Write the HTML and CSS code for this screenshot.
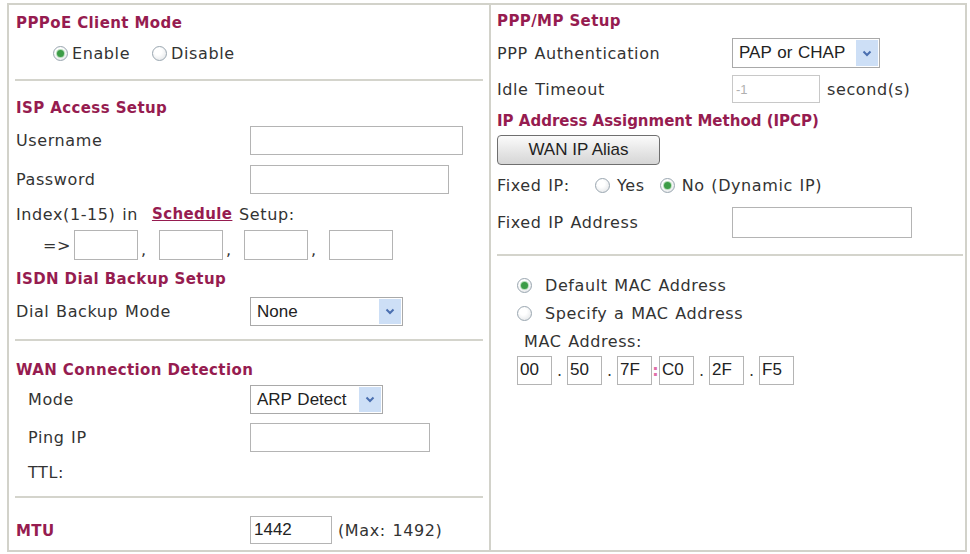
FILE: index.html
```html
<!DOCTYPE html>
<html lang="en">
<head>
    <meta charset="UTF-8">
    <title>PPPoE Setup</title>
    <link rel="stylesheet" href="styles.css">
</head>
<body>
    <div class="panel">
        <!-- Left column -->
        <div class="col col-left">
            <div class="row h36"><span class="title">PPPoE Client Mode</span></div>
            <div class="row h24 mode-opts">
                <label class="opt first"><span class="radio on"></span>Enable</label>
                <label class="opt"><span class="radio"></span>Disable</label>
            </div>
            <div class="sep sep-left"></div>

            <div class="row h26"><span class="title">ISP Access Setup</span></div>
            <div class="row h39">
                <span class="label">Username</span>
                <input class="text w-user" type="text">
            </div>
            <div class="row h39">
                <span class="label">Password</span>
                <input class="text w-pass" type="password">
            </div>
            <div class="row h30">
                Index(1-15) in<a class="link" href="#">Schedule</a>&nbsp;Setup:
            </div>
            <div class="row h32 index-row">
                <span class="arrow-txt">=&gt;</span>
                <input class="text w-idx" type="text"><span class="comma">,</span>
                <input class="text w-idx" type="text"><span class="comma">,</span>
                <input class="text w-idx" type="text"><span class="comma">,</span>
                <input class="text w-idx" type="text">
            </div>

            <div class="row h36"><span class="title">ISDN Dial Backup Setup</span></div>
            <div class="row h29">
                <span class="label">Dial Backup Mode</span>
                <div class="select w-dial">None<span class="drop"><svg width="10" height="7" viewBox="0 0 10 7"><path d="M1.5 1.5 L5 5 L8.5 1.5" fill="none" stroke="#4a6fb0" stroke-width="2"/></svg></span></div>
            </div>
            <div class="sep sep-left sep-b"></div>

            <div class="row h30"><span class="title">WAN Connection Detection</span></div>
            <div class="row h29 indent">
                <span class="label">Mode</span>
                <div class="select w-mode">ARP Detect<span class="drop"><svg width="10" height="7" viewBox="0 0 10 7"><path d="M1.5 1.5 L5 5 L8.5 1.5" fill="none" stroke="#4a6fb0" stroke-width="2"/></svg></span></div>
            </div>
            <div class="row h47 indent">
                <span class="label">Ping IP</span>
                <input class="text w-ping" type="text">
            </div>
            <div class="row h22 indent">
                <span class="label">TTL:</span>
            </div>
            <div class="sep sep-left sep-b"></div>

            <div class="row h36">
                <span class="label"><span class="title">MTU</span></span>
                <input class="text w-mtu" type="text" value="1442">
                <span class="hint">(Max:&nbsp;1492)</span>
            </div>
        </div>

        <!-- Right column -->
        <div class="col col-right">
            <div class="row h32"><span class="title">PPP/MP Setup</span></div>
            <div class="row h32">
                <span class="label">PPP Authentication</span>
                <div class="select w-auth">PAP or CHAP<span class="drop"><svg width="10" height="7" viewBox="0 0 10 7"><path d="M1.5 1.5 L5 5 L8.5 1.5" fill="none" stroke="#4a6fb0" stroke-width="2"/></svg></span></div>
            </div>
            <div class="row h40">
                <span class="label">Idle Timeout</span>
                <input class="text w-idle" type="text" value="-1" disabled>
                <span class="unit">second(s)</span>
            </div>
            <div class="row h24"><span class="title tight">IP Address Assignment Method (IPCP)</span></div>
            <div class="row h34">
                <button class="btn" type="button">WAN IP Alias</button>
            </div>
            <div class="row h36">
                <span class="fixed-label">Fixed IP:</span>
                <label class="opt yes"><span class="radio"></span>Yes</label>
                <label class="opt"><span class="radio on"></span>No (Dynamic IP)</label>
            </div>
            <div class="row h39">
                <span class="label">Fixed IP Address</span>
                <input class="text w-fixed" type="text">
            </div>
            <div class="sep sep-right"></div>

            <div class="row h26 mac-opt">
                <label class="opt wide"><span class="radio on"></span>Default MAC Address</label>
            </div>
            <div class="row h30 mac-opt">
                <label class="opt wide"><span class="radio"></span>Specify a MAC Address</label>
            </div>
            <div class="row h27 mac-label">MAC Address:</div>
            <div class="row h30 mac-opt">
                <input class="text mac" type="text" value="00"><span class="mac-dot">.</span>
                <input class="text mac" type="text" value="50"><span class="mac-dot">.</span>
                <input class="text mac" type="text" value="7F"><span class="mac-colon">:</span>
                <input class="text mac" type="text" value="C0"><span class="mac-dot">.</span>
                <input class="text mac" type="text" value="2F"><span class="mac-dot">.</span>
                <input class="text mac" type="text" value="F5">
            </div>
        </div>
    </div>
</body>
</html>
```

FILE: styles.css
```css
/* Page */
body {
    margin: 0;
    background: #fff;
    font-family: "DejaVu Sans", Verdana, sans-serif;
    font-size: 16px;
    letter-spacing: 0.6px;
    word-spacing: 1px;
    color: #333;
}

.panel {
    margin: 3px 0 0 7px;
    width: 960px;
    height: 549px;
    box-sizing: border-box;
    border: 2px solid #d2d2ca;
    display: grid;
    grid-template-columns: 482px 1fr;
}

.col-left {
    border-right: 2px solid #d2d2ca;
    padding-left: 7px;
}

.col-right {
    padding-left: 6px;
}

/* Rows */
.row {
    display: flex;
    align-items: center;
    white-space: nowrap;
}

.h22 { height: 22px; }
.h24 { height: 24px; }
.h26 { height: 26px; }
.h27 { height: 27px; }
.h29 { height: 29px; }
.h30 { height: 30px; }
.h32 { height: 32px; }
.h34 { height: 34px; }
.h36 { height: 36px; }
.h39 { height: 39px; }
.h40 { height: 40px; }
.h47 { height: 47px; }

.label {
    width: 234px;
    flex: none;
}

.col-right .label {
    width: 235px;
}

.indent .label {
    padding-left: 12px;
    width: 222px;
}

.title {
    font-weight: bold;
    font-size: 15px;
    letter-spacing: 0.4px;
    word-spacing: 0;
    color: #961c50;
}

.title.tight {
    letter-spacing: 0;
}

.link {
    margin-left: 14px;
    font-weight: bold;
    font-size: 15px;
    letter-spacing: 0.4px;
    color: #961c50;
    text-decoration: underline;
}

/* Separators */
.sep {
    border-top: 2px solid #d4d4cc;
    margin: 14px 6px 14px -1px;
}

.sep-b {
    margin-top: 13px;
}

.sep-right {
    margin: 12px 2px 16px 0;
}

/* Inputs */
.text {
    box-sizing: border-box;
    height: 29px;
    margin: 0;
    padding: 0 3px;
    border: 1px solid #b4b4b4;
    background: #fff;
    font-family: "Liberation Sans", Arial, sans-serif;
    font-size: 17px;
    letter-spacing: 0;
    color: #222;
    outline: none;
}

.text:disabled {
    color: #b0b0b0;
    font-size: 13px;
    border-color: #c8c8c8;
}

.w-user { width: 213px; }
.w-pass { width: 199px; }
.w-idx { width: 64px; height: 30px; }
.w-ping { width: 180px; }
.w-mtu { width: 82px; height: 28px; }
.w-idle { width: 88px; height: 28px; }
.w-fixed { width: 180px; height: 31px; }

.index-row {
    padding-left: 27px;
}

.arrow-txt {
    width: 31px;
}

.comma {
    width: 21px;
    padding-left: 3px;
    box-sizing: border-box;
    align-self: flex-end;
    margin-bottom: 2px;
}

.hint {
    margin-left: 6px;
}

.unit {
    margin-left: 7px;
}

/* Select boxes */
.select {
    box-sizing: border-box;
    height: 29px;
    display: flex;
    align-items: center;
    justify-content: space-between;
    padding-left: 6px;
    border: 1px solid #a9a9a9;
    font-family: "Liberation Sans", Arial, sans-serif;
    font-size: 17px;
    letter-spacing: 0;
    color: #222;
}

.select .drop {
    width: 22px;
    align-self: stretch;
    margin: 1px;
    background: #cddff6;
    display: flex;
    align-items: center;
    justify-content: center;
}

.w-dial { width: 153px; }
.w-mode { width: 133px; }
.w-auth { width: 148px; height: 30px; }

/* Radio buttons */
.opt {
    display: inline-flex;
    align-items: center;
    gap: 4px;
}

.radio {
    flex: none;
    width: 15px;
    height: 15px;
    box-sizing: border-box;
    border-radius: 50%;
    border: 1px solid #9aa6b0;
    background: radial-gradient(circle at 40% 35%, #fff 30%, #dde0e3);
    position: relative;
}

.radio.on::after {
    content: "";
    position: absolute;
    inset: 3px;
    border-radius: 50%;
    background: #3c9c46;
    box-shadow: 0 0 0 1px #b5dcb8;
}

.mode-opts {
    padding-left: 37px;
}

.mode-opts .first {
    margin-right: 22px;
}

.fixed-label {
    width: 98px;
}

.opt.yes {
    margin-right: 15px;
}

.opt.yes, .opt.yes + .opt {
    gap: 7px;
}

.mac-opt {
    padding-left: 20px;
}

.opt.wide {
    gap: 13px;
}

.mac-label {
    padding-left: 27px;
}

/* MAC fields */
.mac {
    width: 35px;
    padding: 0 2px;
}

.mac-dot, .mac-colon {
    width: 15px;
    text-align: center;
    letter-spacing: 0;
}

.mac-colon {
    width: 7px;
    color: #e070a8;
    font-weight: bold;
}

/* Buttons */
.btn {
    width: 163px;
    height: 30px;
    margin: 0;
    border: 1px solid #6f6f6f;
    border-radius: 4px;
    background: linear-gradient(#fbfbfb, #e4e4e4 60%, #d6d6d6);
    font-family: "Liberation Sans", Arial, sans-serif;
    font-size: 17px;
    color: #222;
}
```
